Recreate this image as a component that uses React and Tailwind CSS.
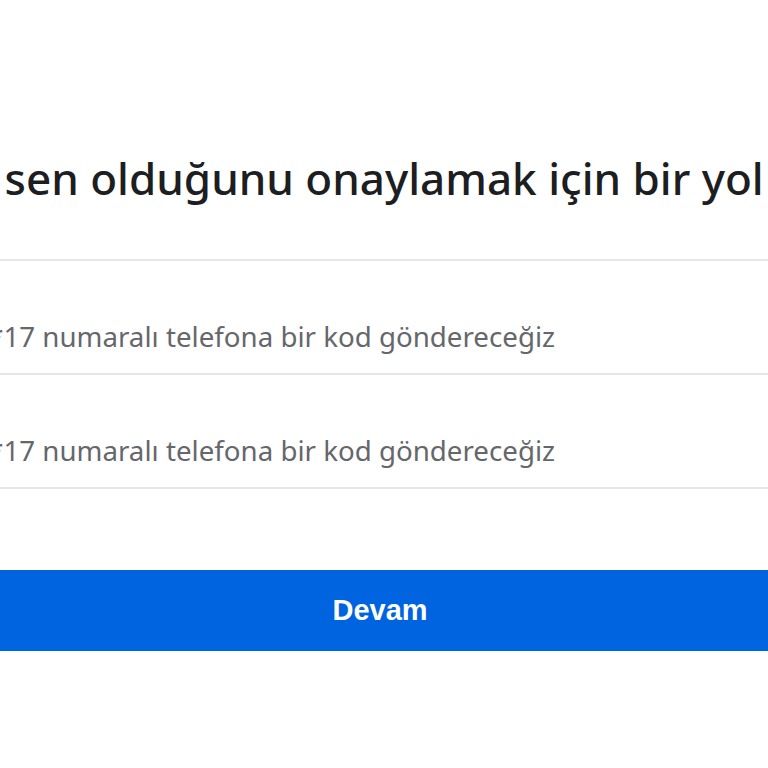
export default function App() {
    return (
        <div className="w-[768px] h-[768px] overflow-hidden bg-white">
            <div className="flex flex-col pt-[150px] -ml-[140px] w-[1040px] font-['Noto_Sans',sans-serif]">
                <h2 className="whitespace-nowrap text-[44px] leading-[56px] font-medium text-[#1c1e21] -ml-[6px]">
                    Bunun sen olduğunu onaylamak için bir yol seç
                </h2>
                <div className="mt-[53px] border-t-2 border-[#e4e6eb]">
                    <div className="h-[114px] pt-[40px] flex items-center border-b-2 border-[#e4e6eb]">
                        <span className="whitespace-nowrap text-[27.7px] text-[#65676b] ml-[60px]">*** **17 numaralı telefona bir kod göndereceğiz</span>
                    </div>
                    <div className="h-[114px] pt-[40px] flex items-center border-b-2 border-[#e4e6eb]">
                        <span className="whitespace-nowrap text-[27.7px] text-[#65676b] ml-[60px]">*** **17 numaralı telefona bir kod göndereceğiz</span>
                    </div>
                </div>
                <button className="mt-[81px] h-[81px] w-full bg-[#0064e0] text-white text-[29px] font-bold font-['Liberation_Sans',sans-serif]">
                    Devam
                </button>
            </div>
        </div>
    )
}
